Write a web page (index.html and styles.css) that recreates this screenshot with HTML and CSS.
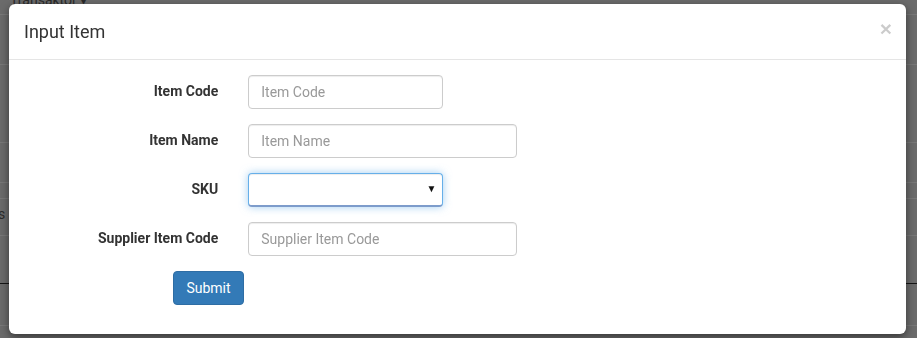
FILE: index.html
```html
<!DOCTYPE html>
<html lang="en">
<head>
    <meta charset="UTF-8" />
    <title>Input Item</title>
    <link rel="stylesheet" href="styles.css">
</head>
<body>
    <!-- page behind the modal -->
    <div class="bg-page">
        <div class="bg-row r1"><span class="bg-text">Transaktor ▾</span></div>
        <div class="bg-row r2"></div>
        <div class="bg-row r3"></div>
        <div class="bg-row r4"></div>
        <div class="bg-row r5"></div>
        <div class="bg-row r6"><span class="bg-text side">Items</span></div>
        <div class="bg-row r7 dark"></div>
        <div class="bg-row r8"></div>
    </div>

    <div class="modal-backdrop">
        <div class="modal-content">
            <div class="modal-header">
                <button class="close" type="button">&times;</button>
                <h4 class="modal-title">Input Item</h4>
            </div>
            <div class="modal-body">
                <form class="form-horizontal">
                    <div class="form-group">
                        <label class="control-label">Item Code</label>
                        <div class="col-3"><input type="text" class="form-control" placeholder="Item Code"></div>
                    </div>
                    <div class="form-group">
                        <label class="control-label">Item Name</label>
                        <div class="col-4"><input type="text" class="form-control" placeholder="Item Name"></div>
                    </div>
                    <div class="form-group">
                        <label class="control-label">SKU</label>
                        <div class="col-3">
                            <div class="select-wrap">
                                <select class="form-control focused">
                                    <option></option>
                                </select>
                            </div>
                        </div>
                    </div>
                    <div class="form-group">
                        <label class="control-label">Supplier Item Code</label>
                        <div class="col-4"><input type="text" class="form-control" placeholder="Supplier Item Code"></div>
                    </div>
                    <div class="form-group submit-row">
                        <button type="button" class="btn-primary">Submit</button>
                    </div>
                </form>
            </div>
        </div>
    </div>
</body>
</html>
```

FILE: styles.css
```css
* {
    box-sizing: border-box;
    margin: 0;
    padding: 0;
}

body {
    font-family: Roboto, "Liberation Sans", sans-serif;
    font-size: 14px;
    line-height: 1.42857;
    color: #333;
    background-color: #6b6b6b;
    overflow: hidden;
    height: 338px;
}

/* Background page (dimmed) */
.bg-page {
    width: 917px;
}

.bg-row {
    border-bottom: 1px solid #787878;
    position: relative;
}

.bg-row.dark {
    border-bottom-color: #151515;
}

.r1 { height: 22px; }
.r2 { height: 50px; }
.r3 { height: 78px; }
.r4 { height: 40px; }
.r5 { height: 16px; }
.r6 { height: 29px; }
.r7 { height: 48px; }
.r8 { height: 42px; }

.bg-text {
    display: block;
    color: #2a2a2a;
    font-size: 14px;
    line-height: 14px;
    margin-top: -7px;
    padding-left: 10px;
}

.bg-text.side {
    margin-top: 8px;
    padding-left: 0;
    margin-left: -30px;
}

/* Modal */
.modal-backdrop {
    position: fixed;
    top: 0;
    left: 0;
    width: 100%;
    height: 100%;
    padding: 4px 11px 0 9px;
}

.modal-content {
    background-color: #fff;
    border-radius: 6px;
    box-shadow: 0 3px 9px rgba(0, 0, 0, 0.5);
    width: 897px;
    height: 330px;
}

.modal-header {
    padding: 15px;
    border-bottom: 1px solid #e5e5e5;
    height: 56px;
}

.modal-title {
    font-size: 18px;
    font-weight: 400;
    line-height: 25px;
    color: #333;
}

.close {
    float: right;
    font-size: 21px;
    font-weight: bold;
    line-height: 1;
    color: #000;
    opacity: 0.2;
    background: none;
    border: none;
    margin-top: -1px;
    margin-right: -1px;
    font-family: "Liberation Sans", sans-serif;
}

.modal-body {
    padding: 15px;
}

/* Form */
.form-group {
    display: flex;
    margin: 0 -15px 15px;
}

.control-label {
    width: 224.25px;
    padding: 7px 15px 0;
    text-align: right;
    font-weight: 700;
    color: #333;
}

.col-3 {
    width: 224.25px;
    padding: 0 15px;
}

.col-4 {
    width: 299px;
    padding: 0 15px;
}

.form-control {
    display: block;
    width: 100%;
    height: 34px;
    padding: 6px 12px;
    font-family: Roboto, "Liberation Sans", sans-serif;
    font-size: 14px;
    color: #555;
    background-color: #fff;
    border: 1px solid #ccc;
    border-radius: 4px;
    box-shadow: inset 0 1px 1px rgba(0, 0, 0, 0.075);
    outline: none;
}

.form-control::placeholder {
    color: #999;
}

.select-wrap {
    position: relative;
}

.select-wrap select {
    appearance: none;
    -webkit-appearance: none;
}

.select-wrap::after {
    content: '▼';
    position: absolute;
    right: 6px;
    top: 9px;
    font-size: 10px;
    color: #111;
    pointer-events: none;
}

.form-control.focused {
    border-color: #66afe9;
    border-bottom: 2px solid #7d9ccb;
    box-shadow: inset 0 1px 1px rgba(0, 0, 0, 0.075), 0 0 8px rgba(102, 175, 233, 0.6);
}

.submit-row {
    padding-left: 164px;
    margin-bottom: 0;
}

.btn-primary {
    font-family: Roboto, "Liberation Sans", sans-serif;
    font-size: 14px;
    line-height: 20px;
    padding: 6px 12px;
    color: #fff;
    background-color: #337ab7;
    border: 1px solid #2e6da4;
    border-radius: 4px;
    width: 71px;
    height: 34px;
}
```
